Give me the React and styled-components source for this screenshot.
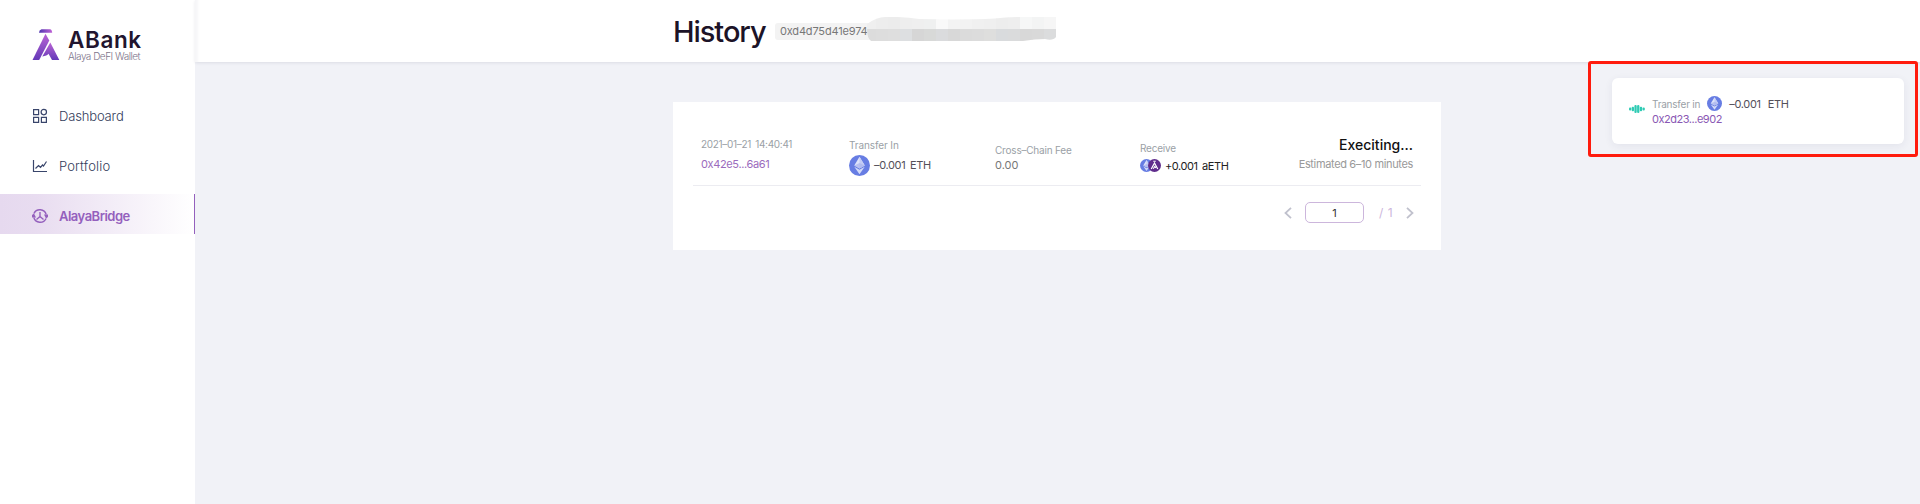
import React from 'react';
import styled, { createGlobalStyle } from 'styled-components';

const Global = createGlobalStyle`
  * { box-sizing: border-box; }
  body { margin: 0; background: #f1f2f7; font-family: Inter, "Liberation Sans", sans-serif; }
`;
const Page = styled.div`
  position: relative; display: flex; width: 1920px; height: 504px; background: #f1f2f7; overflow: hidden;
`;
const Sidebar = styled.aside`
  width: 195px; height: 504px; background: #fff; flex: none; display: flex; flex-direction: column; padding-top: 28px;
`;
const Brand = styled.div`
  display: flex; height: 34px; padding-left: 32px; gap: 8px; margin-bottom: 32px;
`;
const BrandText = styled.div`padding-top: 1px;`;
const BrandName = styled.div`
  font-size: 22.5px; line-height: 22px; font-weight: 600; color: #22152f; letter-spacing: 0.6px; white-space: nowrap;
`;
const BrandSub = styled.div`
  font-size: 10px; line-height: 10px; color: #7d748a; letter-spacing: -0.5px; white-space: nowrap; font-weight: 300;
`;
const NavItem = styled.a`
  display: flex; align-items: center; height: 40px; margin-bottom: 10px; padding: 4px 0 0 32px; gap: 11px;
  font-size: 13px; color: ${(p) => (p.$active ? '#9460bd' : '#333b5a')};
  font-weight: ${(p) => (p.$active ? 600 : 300)};
  letter-spacing: ${(p) => p.$track || 0}px;
  background: ${(p) => (p.$active ? 'linear-gradient(90deg, #e6d9ef 0%, #e8dcf0 18%, #fff 100%)' : 'none')};
  border-right: ${(p) => (p.$active ? '1px solid #9460bd' : '0')};
  svg { flex: none; }
`;
const Main = styled.main`flex: 1; display: flex; flex-direction: column;`;
const Header = styled.header`
  height: 62px; background: #fff; box-shadow: 0 1px 3px rgba(40, 40, 70, 0.1), inset 5px 0 3px -2px #f6f6f8;
  display: flex; align-items: center; padding-left: 478px;
`;
const Title = styled.h1`
  margin: 0; font-size: 29px; font-weight: 500; line-height: 36px; color: #1c1327; width: 102px; white-space: nowrap;
  letter-spacing: -1.05px; padding-top: 1px;
`;
const Address = styled.div`
  height: 17px; width: 100px; border-radius: 3px; background: #f3f3f3; padding-left: 5px; flex: none; margin-top: 1px;
`;
const Text = styled.span`
  display: block; white-space: nowrap; font-size: ${(p) => p.$size || 11}px; line-height: ${(p) => p.$line || 16}px;
  color: ${(p) => p.$color || '#9a9fa6'}; letter-spacing: ${(p) => p.$track || 0}px; font-weight: ${(p) => p.$weight || 400};
  word-spacing: ${(p) => p.$word || 0}px;
`;
const MosaicArt = styled.svg`display: block; flex: none; margin-left: -8px; margin-top: -4px;`;
const Card = styled.section`
  width: 768px; height: 148px; margin: 40px 0 0 478px; background: #fff; padding: 32px 20px 0;
`;
const Row = styled.div`
  display: flex; height: 52px; border-bottom: 1px solid #ececf1; padding: 0 8px;
`;
const Cell = styled.div`
  width: ${(p) => p.$w}px; padding-top: ${(p) => p.$top || 0}px; flex: none;
  display: flex; flex-direction: column; align-items: ${(p) => (p.$end ? 'flex-end' : 'flex-start')};
`;
const Line = styled.div`display: flex; align-items: center; height: ${(p) => p.$h}px; gap: ${(p) => p.$gap || 4}px;`;
const Coins = styled.div`display: flex; svg + svg { margin-left: -5px; }`;
const Pager = styled.div`
  display: flex; align-items: center; justify-content: flex-end; height: 21px; margin-top: 16px; padding-right: 7px;
`;
const PageBox = styled.div`
  width: 59px; height: 21px; border: 1px solid #ccb6dc; border-radius: 5px; margin: 0 15px 0 13px;
  display: flex; align-items: center; justify-content: center;
`;
const Total = styled.div`width: 27px;`;
const Toast = styled.div`
  position: absolute; left: 1612px; top: 78px; width: 292px; height: 66px; background: #fff; border-radius: 6px;
  box-shadow: 0 2px 8px rgba(40, 40, 80, 0.07); display: flex; padding: 17px 0 0 17px; gap: 7px;
`;
const Pulse = styled.div`padding-top: 9px; width: 16px; line-height: 0;`;
const Frame = styled.div`
  position: absolute; left: 1588px; top: 61px; width: 330px; height: 96px; border: 3px solid #ff1b0d; border-radius: 3px;
`;

const Eth = ({ size }) => (
  <svg width={size} height={size} viewBox="0 0 32 32">
    <circle cx="16" cy="16" r="16" fill="#677de3" />
    <path d="M16 2.500 24 16 16 20.500 8 16Z" fill="#dfe4fa" />
    <path d="M16 2.500 24 16 16 20.500Z" fill="#c4ccf5" />
    <path d="M16 12 24 16 16 20.500 8 16Z" fill="#a9b4ed" opacity=".7" />
    <path d="M8 18 16 22.500 24 18 16 29.500Z" fill="#d3daf8" />
  </svg>
);
const Alaya = ({ size }) => (
  <svg width={size} height={size} viewBox="0 0 26 26">
    <circle cx="13" cy="13" r="13" fill="#5f2c8c" />
    <path d="M10.500 4.500h5" stroke="#fff" strokeWidth="2" />
    <path d="M6.500 20 13 8l6.500 12M10.500 19.500l3-4.500 2 3" stroke="#fff" strokeWidth="2.400" fill="none" />
  </svg>
);
const Logo = () => (
  <svg width="28" height="34" viewBox="0 0 28 34">
    <defs>
      <linearGradient id="lg" x1="0" y1="0" x2="0" y2="1">
        <stop offset="0" stopColor="#b964d4" /><stop offset="1" stopColor="#6439b8" />
      </linearGradient>
      <linearGradient id="bar" x1="0" y1="0" x2="1" y2="0">
        <stop offset="0" stopColor="#4f35b0" /><stop offset="1" stopColor="#c063d6" />
      </linearGradient>
    </defs>
    <path d="M9.500 1.200H18Q20 1.500 20.200 4.800H7Q7 1.800 9.500 1.200Z" fill="url(#bar)" />
    <path d="M13.500 5.800 17.300 12.500 7.200 32H.5Z" fill="url(#lg)" />
    <path d="M18.300 14.500 27.300 32H20L16.500 25.800Q15 27.800 10.300 28.500Z" fill="url(#lg)" />
  </svg>
);
const GridIcon = () => (
  <svg width="16" height="16" viewBox="0 0 16 16" fill="none" stroke="#39456b" strokeWidth="1.200">
    <path d="M1.600 1.600h5v5h-5zM1.600 9.400h5v5h-5zM9.400 9.400h5v5h-5z" /><circle cx="11.800" cy="4.100" r="2.700" />
  </svg>
);
const ChartIcon = () => (
  <svg width="16" height="16" viewBox="0 0 16 16" fill="none" stroke="#39456b" strokeWidth="1.200">
    <path d="M1.500 2v11.500H15M3.500 10.500l3-3 2 1.800 2-2.300 1 1L14.500 3.500" />
  </svg>
);
const BridgeIcon = () => (
  <svg width="16" height="16" viewBox="0 0 16 16" fill="none" stroke="#9460bd" strokeWidth="1.400">
    <path d="M1.900 5.500A6.600 6.600 0 0 1 14.200 6.500M14.100 10.500A6.600 6.600 0 0 1 1.800 9.500M8 4v4.500L4.500 11.500M8 8.500l3.500 3" />
    <path d="M12 6.500h4v2.500l-2 1.500zM0 9.500h4L2 5.500 0 7z" fill="#9460bd" stroke="none" />
  </svg>
);
const Arrow = ({ right }) => (
  <svg width="8" height="12" viewBox="0 0 8 12" fill="none" stroke="#c0c1cd" strokeWidth="1.800">
    <path d={right ? 'M1 .8 6.500 6 1 11.200' : 'M7 .8 1.500 6 7 11.200'} />
  </svg>
);
const upper = ['#efefef', '#ededed', '#ececec', '#eeeeee', '#efefef', '#eff0f0', '#f9f9f9', '#f3f3f3', '#f2f2f2', '#f0f0f0', '#efefef', '#ededed', '#eeeeee', '#f6f7f7', '#f3f4f4', '#f6f6f6', '#f4f5f5'];
const lower = ['#dcdcdc', '#dddddd', '#dedede', '#dddfe1', '#d6d6d6', '#d8d9d8', '#dadbdd', '#d8d8d8', '#dbdbdb', '#dcdcdc', '#dededd', '#d9dbdd', '#dadbdc', '#d8d8d8', '#d9d9d9', '#dbdcdd', '#efefef'];
const Mosaic = () => (
  <MosaicArt width="189" height="24" viewBox="0 0 189 24">
    <defs>
      <clipPath id="smear">
        <path d="M0 12V7Q10 0 18 0Q38-.5 52 2Q95 3 128 1.500Q138 0 150 0H189V20Q186 24 178 22Q168 22 156 24H4Q0 21 0 12Z" />
      </clipPath>
    </defs>
    <g clipPath="url(#smear)">
      {upper.map((c, i) => <rect key={i} x={i * 12 - 3} y="0" width="12.500" height="12" fill={c} />)}
      {lower.map((c, i) => <rect key={i} x={i * 12 - 3} y="12" width="12.500" height="12" fill={c} />)}
    </g>
  </MosaicArt>
);
const bars = [[0, 3], [2.700, 4.500], [5.400, 8], [8.100, 8], [10.800, 4.500], [13.500, 3]];

export default function App() {
  return (
    <Page>
      <Global />
      <Sidebar>
        <Brand>
          <Logo />
          <BrandText>
            <BrandName>ABank</BrandName>
            <BrandSub>Alaya DeFI Wallet</BrandSub>
          </BrandText>
        </Brand>
        <NavItem $track={-0.15}><GridIcon />Dashboard</NavItem>
        <NavItem $track={0.15}><ChartIcon />Portfolio</NavItem>
        <NavItem $active $track={-0.5}><BridgeIcon />AlayaBridge</NavItem>
      </Sidebar>
      <Main>
        <Header>
          <Title>History</Title>
          <Address><Text $line={17} $color="#777" $track={-0.17}>0xd4d75d41e974</Text></Address>
          <Mosaic />
        </Header>
        <Card>
          <Row>
            <Cell $w={148} $top={2}>
              <Text $size={10} $line={17} $track={-0.3} $word={1.5}>2021–01–21 14:40:41</Text>
              <Text $line={22} $color="#9b6bbd" $track={-0.36}>0x42e5...6a61</Text>
            </Cell>
            <Cell $w={146} $top={2}>
              <Text $size={10} $line={18} $track={-0.1}>Transfer In</Text>
              <Line $h={22}><Eth size={21} /><Text $color="#54505a" $track={-0.35} $word={2}>–0.001 ETH</Text></Line>
            </Cell>
            <Cell $w={145} $top={8}>
              <Text $size={10} $line={17} $track={-0.2}>Cross–Chain Fee</Text>
              <Text $line={12} $color="#777">0.00</Text>
            </Cell>
            <Cell $w={140} $top={6}>
              <Text $size={10} $line={17} $track={-0.2}>Receive</Text>
              <Line $h={17}><Coins><Eth size={13} /><Alaya size={13} /></Coins><Text $color="#222" $track={-0.45} $word={2}>+0.001 aETH</Text></Line>
            </Cell>
            <Cell $w={133} $top={2} $end>
              <Text $size={14} $line={18} $color="#111" $weight={500}>Execiting...</Text>
              <Text $line={21} $color="#999" $track={-0.35}>Estimated 6–10 minutes</Text>
            </Cell>
          </Row>
          <Pager>
            <Arrow /><PageBox><Text $color="#333">1</Text></PageBox>
            <Total><Text $size={12} $color="#ccb6dc" $word={1}>/ 1</Text></Total><Arrow right />
          </Pager>
        </Card>
      </Main>
      <Toast>
        <Pulse>
          <svg width="16" height="10" viewBox="0 0 16 10" fill="#2fcbb4">
            {bars.map(([x, h]) => <rect key={x} x={x} y={5 - h / 2} width="2.300" height={h} rx="1" />)}
          </svg>
        </Pulse>
        <Cell $w={200}>
          <Line $h={17} $gap={7}><Text $size={10} $track={-0.22}>Transfer in</Text><Eth size={15} /><Text $color="#54505a" $track={-0.3}>–0.001</Text><Text $color="#54505a" $track={-0.4}>ETH</Text></Line>
          <Text $line={14} $color="#8a58b4" $track={-0.47}>0x2d23...e902</Text>
        </Cell>
      </Toast>
      <Frame />
    </Page>
  );
}
